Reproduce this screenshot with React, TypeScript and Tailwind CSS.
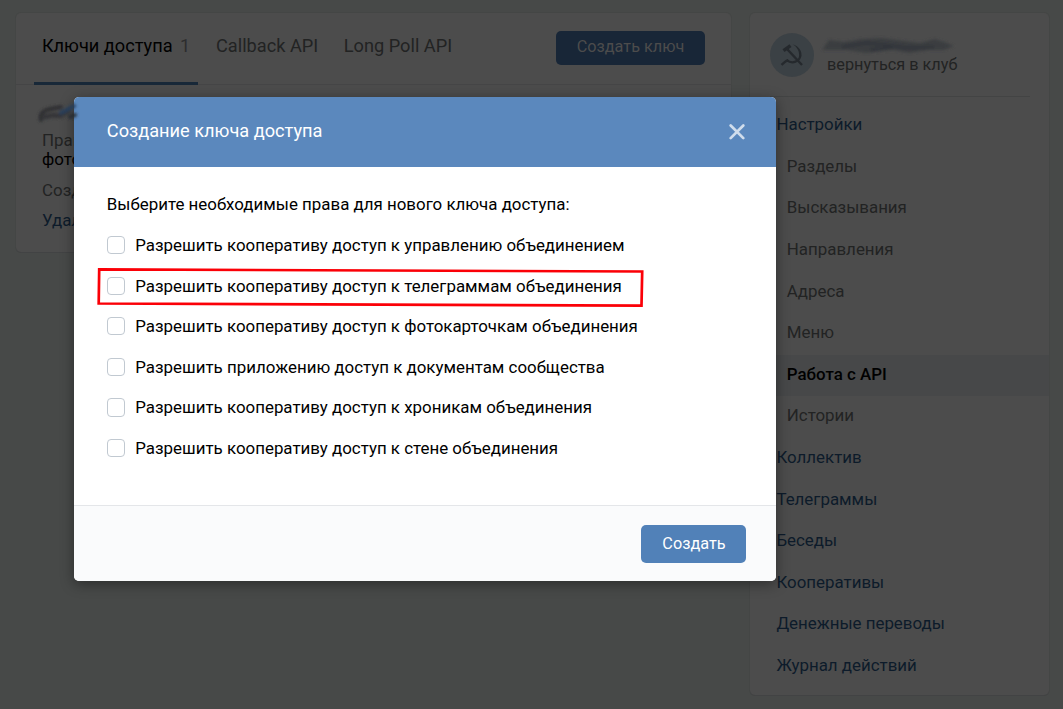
import React from "react";

const menu = [
  { label: "Настройки" },
  { label: "Разделы", sub: true },
  { label: "Высказывания", sub: true },
  { label: "Направления", sub: true },
  { label: "Адреса", sub: true },
  { label: "Меню", sub: true },
  { label: "Работа с API", sub: true, active: true },
  { label: "Истории", sub: true },
  { label: "Коллектив" },
  { label: "Телеграммы" },
  { label: "Беседы" },
  { label: "Кооперативы" },
  { label: "Денежные переводы" },
  { label: "Журнал действий" },
];

const permissions = [
  "Разрешить кооперативу доступ к управлению объединением",
  "Разрешить кооперативу доступ к телеграммам объединения",
  "Разрешить кооперативу доступ к фотокарточкам объединения",
  "Разрешить приложению доступ к документам сообщества",
  "Разрешить кооперативу доступ к хроникам объединения",
  "Разрешить кооперативу доступ к стене объединения",
];

function itemClass(item: { sub?: boolean; active?: boolean }) {
  if (item.active) return "bg-[#474849] pl-[36.8px] font-medium text-black";
  if (item.sub) return "pl-[36.8px] text-[#222323]";
  return "pl-[26.4px] text-[#0d1b2a]";
}

function KeysPanel() {
  return (
    <section className="h-[239px] w-[715px] rounded-[5px] bg-[#4c4c4c] shadow-[0_1px_0_0_#424344,0_0_0_1px_#444645]">
      <header className="flex h-[72px] items-start border-b border-[#454546] pl-[18px] pr-[26px] text-[18.2px] leading-[66px] text-[#222323]">
        <div className="h-[72px] w-[164px] whitespace-nowrap border-b-[3px] border-[#182838] pl-[7.9px] text-black">
          Ключи доступа<span className="ml-[7.5px] text-[#2c2d2e]">1</span>
        </div>
        <div className="ml-[18px]">Callback API</div>
        <div className="ml-[25.6px]">Long Poll API</div>
        <button className="ml-auto mt-[18px] h-[34px] w-[149px] rounded-[5px] bg-[#182637] pb-[3px] text-[16.25px] leading-[28px] text-[#4c4c4c]">
          Создать ключ
        </button>
      </header>
      <div className="pl-[26px] pt-[46px] text-[16.9px] leading-[19px]">
        <p className="text-[#222323]">Права</p>
        <p className="text-black">фото</p>
        <p className="mt-3 text-[#222323]">Создан</p>
        <p className="mt-[11px] text-[#0d1b2a]">Удалить</p>
      </div>
    </section>
  );
}

function Sidebar() {
  return (
    <aside className="h-[682px] w-[299px] rounded-[5px] bg-[#4c4c4c] text-[16.9px] shadow-[0_1px_0_0_#424344,0_0_0_1px_#444645]">
      <div className="ml-5 mr-[19px] flex h-[84px] border-b border-[#434444] pt-5">
        <svg width="44" height="44" viewBox="0 0 44 44">
          <circle cx="22" cy="22" r="22" fill="#3b4145" />
          <g fill="none" stroke="#25292d">
            <path d="M17.5 16.5 32 32" strokeWidth="2.4" />
            <path d="M13.5 17.6 20.5 12.6" strokeWidth="3.4" />
            <path d="M30.3 22.5C29.8 28 22.5 31.8 16.8 27.2" strokeWidth="2.2" />
            <path d="M18.2 27.2C15.8 28 13.8 29.8 11.5 31.8" strokeWidth="2.4" />
          </g>
          <path d="M22.8 11.2C29 13.2 32.5 18.5 31.3 23.5L29.1 23.5C29.6 18.5 27.5 14.5 22.8 11.2Z" fill="#25292d" />
        </svg>
        <div className="ml-[13px] pt-[22px] text-[16.25px] leading-[20px] text-[#222323]">вернуться в клуб</div>
      </div>
      <nav className="pt-[8.2px]">
        {menu.map((item) => (
          <div key={item.label} className={`h-[41.6px] leading-[38px] ${itemClass(item)}`}>
            {item.label}
          </div>
        ))}
      </nav>
    </aside>
  );
}

function KeyDialog() {
  return (
    <div className="absolute left-[74px] top-[97px] flex h-[484px] w-[702px] flex-col overflow-hidden rounded-[5px] bg-white">
      <div className="flex h-[70px] items-start justify-between bg-[#5b88bd] pl-[32.8px] pr-[31px] text-[18.2px] leading-[68px] text-white">
        <span>Создание ключа доступа</span>
        <svg className="mt-[27px]" width="16" height="16" viewBox="0 0 16 16">
          <path d="M1.7 1.5 14.3 14.1M14.3 1.5 1.7 14.1" stroke="#d0ddec" strokeWidth="2.7" strokeLinecap="round" />
        </svg>
      </div>
      <div className="grow pl-[32.8px] pt-[27px] text-[16.9px] leading-[20px] text-black">
        <p>Выберите необходимые права для нового ключа доступа:</p>
        <div className="pt-[10.9px]">
          {permissions.map((label) => (
            <label key={label} className="flex h-[40.56px] items-center">
              <span className="mr-[10.3px] h-[18.4px] w-[18.2px] rounded-[4px] border border-[#c1c9d1] bg-white" />
              {label}
            </label>
          ))}
        </div>
      </div>
      <div className="flex h-[76px] justify-end border-t border-[#e4e6e9] bg-[#fafbfc] pr-[30px] pt-[19px]">
        <button className="h-[38px] w-[105px] rounded-[5px] bg-[#5181b8] pb-[2px] pl-[1px] text-[16.25px] leading-[35px] text-white">Создать</button>
      </div>
    </div>
  );
}

function Marks() {
  return (
    <svg className="pointer-events-none absolute left-0 top-0" width="1063" height="709" viewBox="0 0 1063 709">
      <defs>
        <filter id="soft" x="-20%" y="-50%" width="140%" height="200%">
          <feGaussianBlur stdDeviation="1.4" />
        </filter>
      </defs>
      <path d="M99.2 269.4 642.2 271.5 641.5 305.6 98.7 303.5Z" fill="none" stroke="#fb0007" strokeWidth="2.7" />
      <g filter="url(#soft)">
        <path
          d="M822 50 829 40 844 42 861 39 882 38 904 41 920 43 935 39 944 42 954 46 944 50 929 50 909 53 893 50 866 53 846 50Z"
          fill="#3b3d40"
        />
        <path d="M842 47 866 43 886 45 908 48 934 47M870 50 893 47" fill="none" stroke="#33363b" strokeWidth="3" />
      </g>
      <g filter="url(#soft)" fill="none" strokeLinecap="round">
        <path d="M41 120C39 114 44 110 50 109L61 107" stroke="#2e2f30" strokeWidth="4" />
        <path d="M44 117 54 115 60 116 69 111" stroke="#353637" strokeWidth="5" />
        <path d="M61 113 74 106" stroke="#253d5a" strokeWidth="4" />
        <path d="M70 117 75 115" stroke="#262b31" strokeWidth="4" />
      </g>
    </svg>
  );
}

export default function App() {
  return (
    <main
      className="relative flex h-[709px] w-[1063px] items-start gap-[19px] overflow-hidden bg-[#474948] pl-4 pt-[13px]"
      style={{ fontFamily: 'Roboto, "Liberation Sans", sans-serif' }}
    >
      <KeysPanel />
      <Sidebar />
      <div className="absolute left-[74px] top-[97px] h-[484px] w-[702px] rounded-[5px] shadow-[0_3px_14px_rgba(0,0,0,0.4)]" />
      <KeyDialog />
      <Marks />
    </main>
  );
}
